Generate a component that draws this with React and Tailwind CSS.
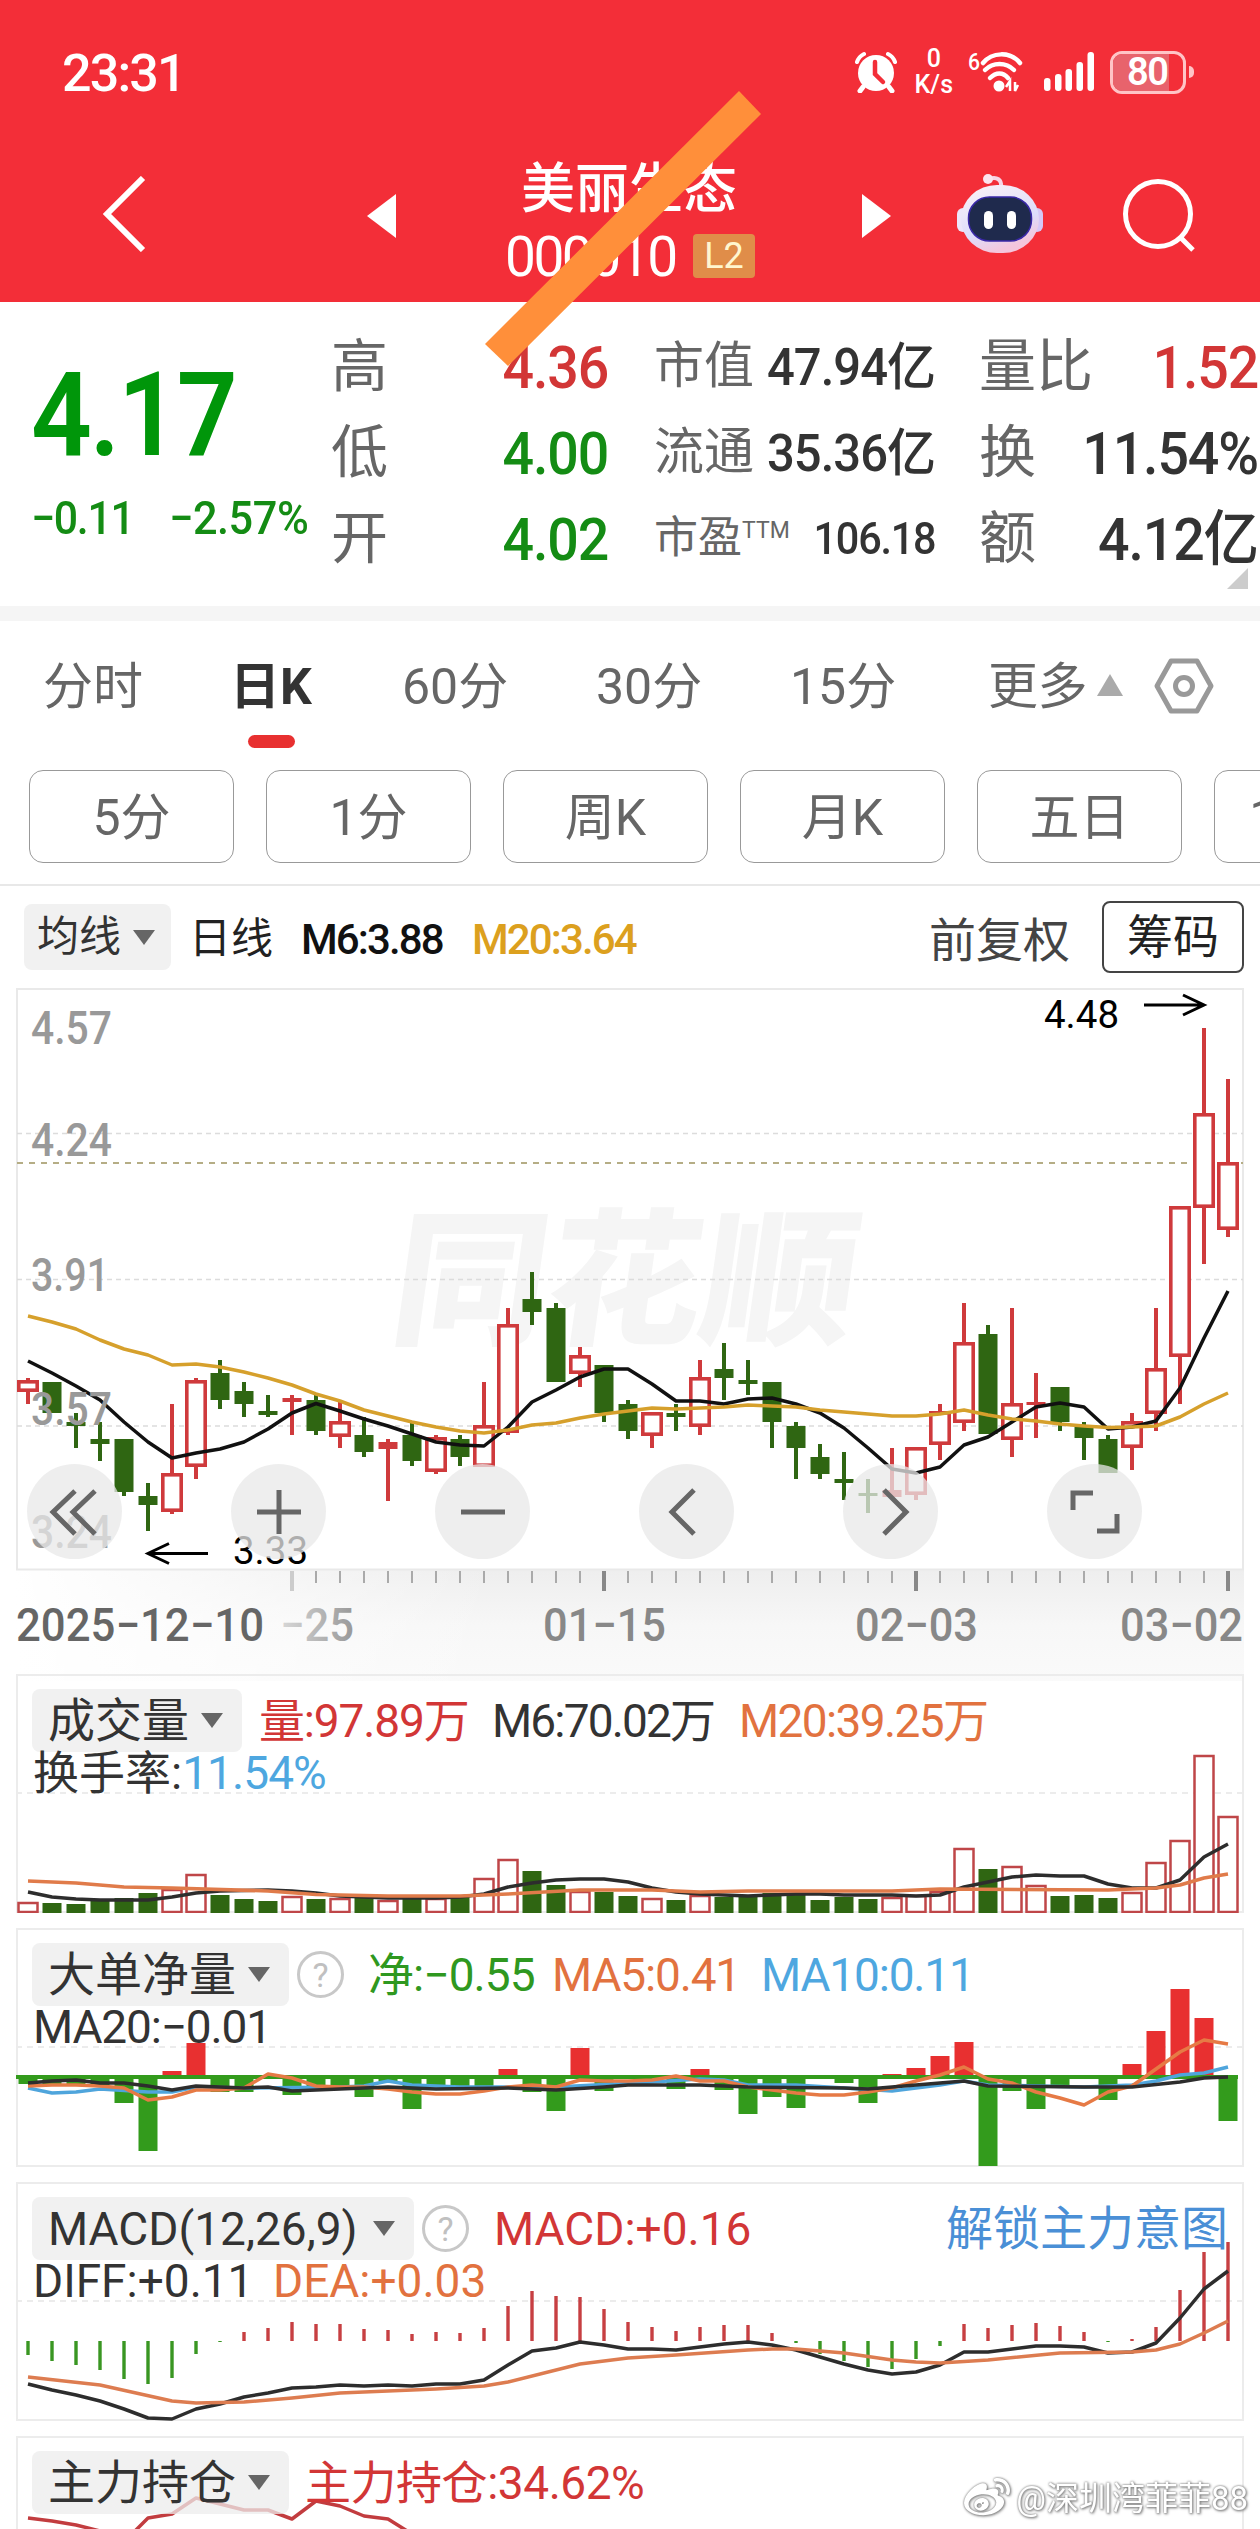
import { FaWeibo } from 'react-icons/fa';

const STEP = 24;
const X0 = 28;
const xAt = (i) => X0 + i * STEP;

// [direction, high, body top, body bottom, low] in chart pixels
const candles = [
  ['r', 1378, 1380, 1392, 1404], ['g', 1382, 1382, 1413, 1413], ['g', 1413, 1422, 1426, 1448], ['g', 1422, 1439, 1444, 1461],
  ['g', 1439, 1439, 1492, 1496], ['g', 1483, 1496, 1505, 1531], ['r', 1404, 1473, 1512, 1514], ['r', 1378, 1380, 1467, 1479],
  ['g', 1360, 1373, 1400, 1409], ['g', 1382, 1391, 1404, 1417], ['g', 1395, 1411, 1415, 1417], ['r', 1395, 1398, 1402, 1435],
  ['g', 1395, 1400, 1431, 1435], ['r', 1402, 1421, 1437, 1448], ['g', 1417, 1435, 1452, 1457], ['r', 1439, 1442, 1449, 1501],
  ['g', 1423, 1435, 1461, 1466], ['r', 1435, 1437, 1472, 1474], ['g', 1435, 1439, 1457, 1466], ['r', 1382, 1425, 1467, 1467],
  ['r', 1308, 1324, 1433, 1435], ['g', 1272, 1299, 1312, 1325], ['g', 1303, 1308, 1382, 1382], ['r', 1347, 1355, 1374, 1387],
  ['g', 1365, 1365, 1413, 1422], ['g', 1400, 1404, 1431, 1439], ['r', 1412, 1412, 1436, 1448], ['g', 1404, 1413, 1417, 1431],
  ['r', 1360, 1377, 1427, 1435], ['g', 1343, 1369, 1378, 1400], ['g', 1360, 1380, 1384, 1395], ['g', 1382, 1382, 1422, 1448],
  ['g', 1422, 1426, 1448, 1479], ['g', 1444, 1457, 1474, 1479], ['g', 1452, 1479, 1483, 1500], ['g', 1479, 1493, 1496, 1513],
  ['r', 1448, 1490, 1497, 1497], ['r', 1447, 1447, 1495, 1500], ['r', 1404, 1411, 1445, 1460], ['r', 1303, 1342, 1423, 1431],
  ['g', 1325, 1334, 1434, 1434], ['r', 1308, 1403, 1440, 1457], ['r', 1373, 1402, 1405, 1438], ['g', 1387, 1387, 1422, 1431],
  ['g', 1422, 1427, 1438, 1460], ['g', 1435, 1439, 1473, 1473], ['r', 1413, 1421, 1448, 1470], ['r', 1308, 1368, 1414, 1431],
  ['r', 1206, 1206, 1357, 1404], ['r', 1028, 1113, 1208, 1264], ['r', 1079, 1162, 1230, 1237],
];

const ma6 = [
  1361, 1373, 1386, 1400, 1422, 1442, 1458, 1453, 1449, 1442, 1429, 1413, 1403.5, 1411, 1419, 1426, 1434, 1442, 1445, 1446, 1427,
  1402, 1390, 1377, 1369, 1369, 1384, 1401, 1401, 1404, 1399, 1398, 1404, 1413, 1428, 1448, 1469, 1473, 1467, 1445, 1437, 1422,
  1407, 1403, 1407, 1429, 1427, 1421, 1388, 1338, 1291,
];
const ma20 = [
  1316, 1322, 1329, 1340, 1349, 1355, 1365, 1364, 1367, 1372, 1378, 1385, 1394, 1401, 1410, 1416, 1422, 1427, 1431, 1433, 1430,
  1425, 1423, 1418, 1414, 1411, 1408, 1409, 1408, 1407, 1405, 1406, 1407, 1410, 1412, 1414, 1416, 1416, 1414, 1410, 1415, 1419,
  1421, 1424, 1426, 1427.5, 1427, 1426, 1417, 1404, 1393,
];

const volumes = [
  11, 10, 9, 12, 15, 20, 24, 39, 18, 14, 12, 17, 14, 15, 16, 13, 15, 15, 16, 35, 54, 42, 28, 22, 21, 17, 15, 13, 18, 16, 16, 20,
  18, 13, 16, 14, 16, 18, 22, 65, 44, 47, 28, 17, 18, 15, 21, 51, 73, 158, 97,
];
const volM6 = [
  1892, 1897, 1899, 1900, 1900, 1900, 1897, 1893, 1891, 1890.5, 1890, 1891, 1893, 1896, 1897, 1898, 1898, 1898, 1897, 1894, 1887,
  1883, 1880, 1879, 1879, 1882, 1888, 1892, 1894, 1895, 1896, 1895, 1894, 1894, 1895, 1895, 1895, 1896, 1895, 1887, 1882, 1877,
  1875, 1876, 1876, 1884, 1888, 1888, 1880, 1857, 1844,
];
const volM20 = [
  [0, 1881], [2, 1883], [4, 1887], [6, 1888], [10, 1891], [12, 1894.5], [15, 1896], [18, 1896], [20, 1894], [23, 1890], [26, 1890],
  [28, 1892], [30, 1891], [36, 1891], [38, 1889], [45, 1890], [47, 1888], [48, 1885], [49, 1878], [50, 1874],
];

const netFlow = [
  -7, -7, -8, -8, -26, -74, 6, 34, -15, -15, -1, -18, -9, -9, -20, -4, -32, -10, -10, -10, 8, -15, -34, 29, -14, -2, 0, -12, 8,
  -13, -37, -20, -31, -1, -6, -26, 3, 9, 21, 35, -89, -14, -32, -10, -2, -23, 13, 46, 88, 59, -44,
];
const flowMa5 = [
  2086, 2085, 2085, 2086, 2088, 2100, 2097, 2090, 2090, 2088, 2074, 2078, 2086, 2087, 2087, 2089, 2092, 2094, 2094, 2091, 2087,
  2085, 2087, 2080, 2081, 2081, 2080, 2076, 2081, 2081, 2087, 2090, 2093, 2095, 2095, 2092, 2088, 2081, 2075, 2067, 2079, 2083,
  2092, 2098, 2105, 2092, 2086, 2069, 2052, 2040, 2044,
];
const flowMa10 = [
  [0, 2088], [1, 2093], [2, 2092], [3, 2089], [5, 2092], [6, 2092], [7, 2087], [9, 2088], [13, 2087], [14, 2086], [15, 2081],
  [16, 2085], [18, 2087], [22, 2087], [26, 2082], [28, 2079], [29, 2080], [30, 2085], [32, 2085], [34, 2088], [36, 2091],
  [38, 2085], [39, 2081], [40, 2085], [44, 2087], [46, 2085], [47, 2081], [48, 2075], [49, 2073], [50, 2067],
];
const flowMa20 = [
  [0, 2083], [1, 2081], [2, 2080], [3, 2083], [4, 2083], [5, 2086], [6, 2090], [7, 2086], [9, 2088], [10, 2087], [11, 2091],
  [13, 2089], [15, 2087], [17, 2089], [20, 2088], [22, 2090], [24, 2087], [25, 2085], [28, 2085], [30, 2087], [34, 2088],
  [35, 2089], [37, 2085], [39, 2081], [40, 2086], [44, 2087], [46, 2087], [48, 2082], [49, 2078], [50, 2077],
];

const macd = [
  -14, -20, -24, -29, -38, -43, -37, -13, -1, 9, 13, 19, 17, 17, 12, 11, 7, 9, 8, 13, 35, 50, 45, 44, 32, 19, 14, 10, 14, 16, 16,
  8, -2, -13, -20, -26, -28, -18, -5, 17, 13, 16, 18, 15, 9, -1, 2, 14, 51, 89, 99,
];
const diff = [
  2384, 2390, 2395, 2401, 2409, 2418, 2419, 2409, 2404, 2397, 2393, 2388, 2387, 2385, 2386, 2385, 2386, 2384, 2384, 2380, 2365,
  2351, 2348, 2342, 2345, 2349, 2349, 2350, 2347, 2344, 2342, 2345, 2350, 2357, 2364, 2370, 2374, 2372, 2365, 2352, 2352, 2349,
  2346, 2346, 2347, 2353, 2352, 2343, 2318, 2289, 2271,
];
const dea = [
  [0, 2377], [3, 2385], [6, 2401], [7, 2403], [9, 2402], [11, 2398], [13, 2393], [17, 2389], [19, 2386], [20, 2382], [23, 2364],
  [25, 2358], [27, 2355], [30, 2350], [31, 2349], [32, 2349], [34, 2353], [36, 2360], [37, 2362], [38, 2363], [40, 2360],
  [43, 2353], [46, 2352], [47, 2350], [48, 2344], [49, 2333], [50, 2321],
];
const holding = [
  [0, 2518], [1, 2521], [2, 2525], [3, 2531], [4, 2542], [5, 2518], [6, 2514], [7, 2498], [8, 2504], [9, 2510], [10, 2510],
  [11, 2519], [12, 2501], [13, 2506], [14, 2516], [15, 2519], [16, 2534], [17, 2548],
];

const toPoints = (data) =>
  data.map((d, i) => (Array.isArray(d) ? `${xAt(d[0])},${d[1]}` : `${xAt(i)},${d}`)).join(' ');

function Line({ data, color, width = 3.5 }) {
  return <polyline points={toPoints(data)} fill="none" stroke={color} strokeWidth={width} strokeLinejoin="round" />;
}

function Caret({ className }) {
  return (
    <svg width="22" height="15" viewBox="0 0 22 15" className={className}>
      <path d="M0 0h22L11 15z" fill="#666" />
    </svg>
  );
}

function Help() {
  return (
    <span className="ml-2 flex size-[47px] shrink-0 items-center justify-center rounded-full border-3 border-[#c8c8c8] text-[34px] leading-none text-[#c0c0c0]">
      ?
    </span>
  );
}

function Panel({ top, height = 239, title, help, chart, first, second, extra }) {
  return (
    <div className="relative mb-[15px] ml-4 h-[239px] w-[1228px] shrink-0 border-2 border-[#ececec]">
      <svg width="1228" height={height} viewBox={`16 ${top} 1228 ${height}`} className="absolute -inset-0.5">
        <path d={`M16 ${top + 119}H1244`} stroke="#ececec" strokeWidth="2" strokeDasharray="6 5" />
        {chart}
      </svg>
      <div className="relative ml-[14px] mt-[13px] flex h-[63px] items-center whitespace-nowrap text-[46px] leading-none">
        <span className="flex h-[63px] items-center rounded-lg bg-[#ececec]/75 pl-4 pr-[19px] text-[47px] text-[#333]">
          {title}
          <Caret className="ml-3" />
        </span>
        {help && <Help />}
        {first}
        {extra}
      </div>
      <div className="relative ml-[15px] mt-px flex h-[39px] items-center whitespace-nowrap text-[46px] leading-none text-[#333]">{second}</div>
    </div>
  );
}

function StatusBar() {
  return (
    <div className="flex h-[144px] items-center pl-[62px] pr-[66px] text-white">
      <span className="mt-[3px] text-[52px] font-medium leading-none tracking-[-0.035em]">23:31</span>
      <svg width="42" height="42" viewBox="0 0 42 42" className="ml-auto">
        <circle cx="21" cy="22" r="18" fill="#fff" />
        <path d="M8 36l-3 4M34 36l3 4" stroke="#fff" strokeWidth="5" strokeLinecap="round" />
        <path d="M2 11c1-3 3-6 7-8M40 11c-1-3-3-6-7-8" fill="none" stroke="#fff" strokeWidth="4" strokeLinecap="round" />
        <path d="M20 11v12l8 8" fill="none" stroke="#f32e38" strokeWidth="4.500" strokeLinecap="round" />
      </svg>
      <span className="ml-[18px] flex flex-col items-center text-[25px] font-medium leading-[26px]">
        <span>0</span>
        <span>K/s</span>
      </span>
      <svg width="56" height="42" viewBox="0 0 56 42" className="ml-[15px] overflow-visible">
        <text x="0" y="19" fontSize="24" fontWeight="500" fill="#fff" textLength="12" lengthAdjust="spacingAndGlyphs">6</text>
        <g fill="none" stroke="#fff" strokeWidth="4.500" strokeLinecap="round">
          <path d="M15 12c9-11 27-12 37 0" />
          <path d="M17 19c8-8 21-8 29 0" />
          <path d="M22 27c6-6 13-6 18 0" />
        </g>
        <circle cx="31" cy="35" r="5.500" fill="#fff" />
        <path d="M38 36l4-6v10M50 34l-3 6V31" stroke="#fff" strokeWidth="2.500" fill="none" />
      </svg>
      <svg width="50" height="40" viewBox="0 0 50 40" className="ml-[20px]">
        <g fill="#fff">
          <rect x="0" y="26" width="6.500" height="13" rx="3" />
          <rect x="11" y="22" width="6.500" height="17" rx="3" />
          <rect x="21.500" y="17" width="6.500" height="22" rx="3" />
          <rect x="32.500" y="10" width="6.500" height="29" rx="3" />
          <rect x="43.500" y="0" width="6.500" height="39" rx="3" />
        </g>
      </svg>
      <span className="relative ml-[16px] flex h-[43px] w-[76px] items-center overflow-hidden rounded-[12px] border-3 border-[#ffc4c6]">
        <span className="absolute inset-y-0 left-0 w-[56px] bg-[#e8636c]" />
        <span className="relative ml-[14px] text-[38px] font-semibold leading-none tracking-[-0.04em]">80</span>
      </span>
      <span className="ml-[3px] h-3 w-[5px] rounded-r-full bg-[#ffc4c6]" />
    </div>
  );
}

function Robot() {
  return (
    <svg width="88" height="82" viewBox="956 172 88 82" className="ml-[65px]">
      <defs>
        <linearGradient id="shell" x1="0" y1="0" x2="0.4" y2="1">
          <stop offset="0" stopColor="#fdf3f6" />
          <stop offset="0.7" stopColor="#dddcfb" />
          <stop offset="1" stopColor="#f4c6dc" />
        </linearGradient>
      </defs>
      <path d="M989 178c8-3 13 1 12 8" fill="none" stroke="#f7d5e6" strokeWidth="4" />
      <circle cx="988" cy="178" r="5" fill="#fce4ee" />
      <rect x="957" y="207" width="12" height="24" rx="6" fill="#ece6fa" />
      <rect x="1031" y="207" width="12" height="24" rx="6" fill="#d5c8f6" />
      <rect x="961" y="184" width="78" height="68" rx="36" fill="url(#shell)" />
      <rect x="968.500" y="196" width="63" height="44" rx="21" fill="#1f2a4d" stroke="#3a28a8" strokeWidth="1.500" />
      <rect x="984" y="210" width="9" height="18" rx="4.500" fill="#fff" />
      <rect x="1007" y="210" width="9" height="18" rx="4.500" fill="#fff" />
    </svg>
  );
}

function Header() {
  return (
    <div className="relative h-[302px] shrink-0 bg-[#f32e38]">
      <StatusBar />
      <div className="flex h-[140px] items-center pl-[102px] text-white">
        <svg width="44" height="76" viewBox="0 0 44 76">
          <path d="M41 2L5 38l36 36" fill="none" stroke="#fff" strokeWidth="6" />
        </svg>
        <svg width="29" height="44" viewBox="0 0 29 44" className="mt-[3px] ml-[221px]">
          <path d="M29 0v44L0 22z" fill="#fff" />
        </svg>
        <div className="ml-[109px] flex w-[252px] flex-col">
          <span className="mt-[8px] ml-[16px] text-[54px] font-medium leading-[72px]">美丽生态</span>
          <span className="mt-[3px] flex h-[53px] items-center">
            <span className="mt-[3px] w-[188px] text-[55px] leading-none tracking-[-0.045em]">000010</span>
            <span className="flex h-11 w-[62px] items-center justify-center rounded bg-[#e08d49] text-[36px] leading-none text-[#fff6cf]">
              L2
            </span>
          </span>
        </div>
        <svg width="29" height="44" viewBox="0 0 29 44" className="mt-[3px] ml-[105px]">
          <path d="M0 0v44l29-22z" fill="#fff" />
        </svg>
        <Robot />
        <svg width="76" height="76" viewBox="0 0 76 76" className="ml-[78px]">
          <circle cx="36" cy="38" r="32.500" fill="none" stroke="#fff" strokeWidth="5" />
          <path d="M58 61l13 13" stroke="#fff" strokeWidth="5" />
        </svg>
      </div>
      <svg width="278" height="277" viewBox="484 90 278 277" className="absolute left-[484px] top-[90px] z-10">
        <path d="M739 91l22 23-253 252-23-22z" fill="#ff8f3a" />
      </svg>
    </div>
  );
}

function Quote({ label, value, labelClass = 'text-[57px]', valueClass }) {
  return (
    <div className="flex h-[86px] items-center justify-between leading-none">
      <span className={`text-[#666] ${labelClass}`}>{label}</span>
      <span className={valueClass}>{value}</span>
    </div>
  );
}

function Quotes() {
  const big = 'pt-[3px] text-[60px] font-medium tracking-[-0.02em] origin-right scale-x-[0.925]';
  const mid = 'pt-[2px] text-[51px] font-medium tracking-[-0.02em] origin-right scale-x-[0.96] text-[#333]';
  return (
    <div className="relative flex h-[304px] shrink-0 whitespace-nowrap pt-[21px]">
      <div className="w-[331px] pl-[31px] text-[#00960a]">
        <div className="mt-[34px] origin-left scale-x-[0.92] text-[116px] font-semibold leading-[116px] tracking-[-0.02em]">4.17</div>
        <div className="mt-[22px] flex text-[46px] font-medium leading-none text-[#148c14]">
          <span className="w-[138px] origin-left scale-x-[0.93] tracking-[-0.03em]">−0.11</span>
          <span className="origin-left scale-x-[0.94] tracking-[-0.01em]">−2.57%</span>
        </div>
      </div>
      <div className="w-[277px]">
        <Quote label="高" value="4.36" valueClass={`${big} text-[#d23636]`} />
        <Quote label="低" value="4.00" valueClass={`${big} text-[#148c14]`} />
        <Quote label="开" value="4.02" valueClass={`${big} text-[#148c14]`} />
      </div>
      <div className="ml-[46px] w-[281px]">
        <Quote label="市值" value="47.94亿" labelClass="text-[50px]" valueClass={mid} />
        <Quote label="流通" value="35.36亿" labelClass="text-[50px]" valueClass={mid} />
        <Quote
          label={<>市盈<span className="relative -top-[15px] text-[23px]">TTM</span></>}
          value="106.18"
          labelClass="text-[44px]"
          valueClass="text-[45px] font-medium tracking-[-0.03em] origin-right scale-x-[0.92] text-[#333]"
        />
      </div>
      <div className="ml-[44px] w-[279px]">
        <Quote label="量比" value="1.52" valueClass={`${big} text-[#d23636]`} />
        <Quote label="换" value="11.54%" valueClass={`${big} text-[#333]`} />
        <Quote label="额" value="4.12亿" valueClass={`${big} text-[#333]`} />
      </div>
      <svg width="21" height="21" viewBox="0 0 21 21" className="absolute right-3 bottom-[17px]">
        <path d="M21 0v21H0z" fill="#ccc" />
      </svg>
    </div>
  );
}

function Tabs() {
  return (
    <div className="relative flex h-[149px] shrink-0 pt-[35px] text-[50px] leading-[62px] whitespace-nowrap text-[#666]">
      <span className="ml-[43px] w-[187px]">分时</span>
      <span className="flex w-[172px] flex-col font-bold text-[#333]">
        日K
        <span className="mt-[17px] ml-[18px] h-[13px] w-[47px] rounded-full bg-[#e83030]" />
      </span>
      <span className="w-[194px]">60分</span>
      <span className="w-[194px]">30分</span>
      <span className="w-[198px]">15分</span>
      <span className="w-[98px] tracking-[-0.01em]">更多</span>
      <svg width="26" height="22" viewBox="0 0 26 22" className="mt-[18px] ml-[11px]">
        <path d="M13 0l13 22H0z" fill="#aaa" />
      </svg>
      <svg width="60" height="56" viewBox="0 0 60 56" className="mt-[2px] ml-[31px]">
        <path d="M17 3h26l14 25-14 25H17L3 28z" fill="none" stroke="#999" strokeWidth="5" strokeLinejoin="round" />
        <circle cx="30" cy="28" r="8.500" fill="none" stroke="#999" strokeWidth="5" />
      </svg>
    </div>
  );
}

function Periods() {
  return (
    <div className="flex h-[116px] shrink-0 gap-8 overflow-hidden border-b-2 border-[#e8e8e8] pl-[29px]">
      {['5分', '1分', '周K', '月K', '五日', '120分'].map((name) => (
        <span
          key={name}
          className="flex h-[93px] w-[205px] shrink-0 items-center justify-center rounded-[14px] border-[1.500px] border-[#999] pt-[2px] text-[50px] leading-none text-[#666]"
        >
          {name}
        </span>
      ))}
    </div>
  );
}

function ChartBar() {
  return (
    <div className="flex h-[102px] shrink-0 items-center pl-6 text-[42px] leading-none whitespace-nowrap">
      <span className="flex h-[66px] w-[147px] items-center rounded-lg bg-[#f1f1f1] pl-[13px] text-[#333]">
        均线
        <Caret className="ml-3" />
      </span>
      <span className="ml-[18px] w-[112px] pt-[3px] text-[#222]">日线</span>
      <span className="w-[171px] pt-[5px] font-medium tracking-[-0.045em] text-[#111]">M6:3.88</span>
      <span className="pt-[5px] font-medium tracking-[-0.045em] text-[#dca01e]">M20:3.64</span>
      <span className="ml-auto pt-[6px] text-[47px] text-[#444]">前复权</span>
      <span className="mr-4 ml-[32px] flex h-[72px] w-[142px] items-center justify-center rounded-lg border-2 border-[#444] text-[46px] text-[#222]">
        筹码
      </span>
    </div>
  );
}

const controls = [
  'M48 27L26 48l22 22M68 27L46 48l22 22',
  'M26 48h44M48 26v44',
  'M26 48h44',
  'M55 26L33 48l22 22',
  'M41 26l22 22-22 22',
  'M26 46V29h20M50 67h20V50',
];

function KLine() {
  return (
    <div className="relative ml-4 h-[686px] w-[1228px] shrink-0">
      <svg width="1228" height="686" viewBox="16 988 1228 686" className="block overflow-visible">
        <defs>
          <linearGradient id="axisDown" x1="0" y1="0" x2="0" y2="1">
            <stop offset="0" stopColor="#eeeeee" />
            <stop offset="0.5" stopColor="#f7f7f7" />
            <stop offset="1" stopColor="#fafafa" />
          </linearGradient>
          <linearGradient id="axisFade" x1="0" y1="0" x2="1" y2="0">
            <stop offset="0" stopColor="#fff" />
            <stop offset="1" stopColor="#fff" stopOpacity="0" />
          </linearGradient>
          <linearGradient id="dateFade" x1="0" y1="0" x2="1" y2="0">
            <stop offset="0" stopColor="#d8d8d8" />
            <stop offset="1" stopColor="#999" />
          </linearGradient>
        </defs>
        <rect x="16" y="1570" width="1228" height="111" fill="url(#axisDown)" />
        <rect x="16" y="1570" width="480" height="111" fill="url(#axisFade)" />
        <rect x="17" y="989" width="1226" height="580.500" fill="none" stroke="#e9e9e9" strokeWidth="2" />
        <text x="388" y="1333" fontSize="147" fontWeight="900" fill="#f5f5f5" textLength="464" lengthAdjust="spacingAndGlyphs" transform="skewX(-8)" className="translate-x-[186px]">
          同花顺
        </text>
        <path d="M17 1133.500H1243M17 1279.500H1243M17 1426H1243" stroke="#dcdcdc" strokeWidth="1.500" strokeDasharray="5 4" />
        <path d="M17 1163H1243" stroke="#b5ad85" strokeWidth="2" strokeDasharray="6 6" />

        {candles.map(([dir, high, top, bottom, low], i) => {
          const x = xAt(i);
          if (dir === 'g') {
            return (
              <g key={i} fill="#2f6612">
                <rect x={x - 2} y={high} width="4" height={low - high} />
                <rect x={x - 9.5} y={top} width="19" height={bottom - top} />
              </g>
            );
          }
          const thin = bottom - top < 8;
          return (
            <g key={i} fill="#cf3a3c">
              <rect x={x - 2} y={high} width="4" height={top - high} />
              <rect x={x - 2} y={bottom} width="4" height={low - bottom} />
              {thin ? (
                <rect x={x - 9.5} y={top} width="19" height={bottom - top} />
              ) : (
                <rect x={x - 9.2} y={top + 1.8} width="18.400" height={bottom - top - 3.6} fill="#fff" stroke="#cf3a3c" strokeWidth="3.600" />
              )}
            </g>
          );
        })}
        <Line data={ma6} color="#111" />
        <Line data={ma20} color="#d6a02c" />

        <g fontSize="46" fontWeight="500" fill="#999">
          <text x="31" y="1044" textLength="81" lengthAdjust="spacingAndGlyphs">4.57</text>
          <text x="31" y="1156" textLength="81" lengthAdjust="spacingAndGlyphs">4.24</text>
          <text x="31" y="1291" textLength="78" lengthAdjust="spacingAndGlyphs">3.91</text>
          <text x="31" y="1425" textLength="81" lengthAdjust="spacingAndGlyphs">3.57</text>
          <text x="31" y="1548" textLength="81" lengthAdjust="spacingAndGlyphs">3.24</text>
        </g>
        <g fontSize="39" fill="#000">
          <text x="1044" y="1028" textLength="75" lengthAdjust="spacingAndGlyphs">4.48</text>
          <text x="233" y="1564" textLength="75" lengthAdjust="spacingAndGlyphs">3.33</text>
        </g>
        <g fill="none" stroke="#000" strokeWidth="3">
          <path d="M1144 1005h60M1183 995l21 10-21 10" />
          <path d="M208 1553.500h-59M169 1543.500l-21 10 21 10" />
        </g>

        {candles.map((_, i) => {
          if (i < 11) return null;
          const major = (i - 11) % 13 === 0;
          return (
            <rect
              key={i}
              x={xAt(i) - (major ? 2 : 1)}
              y="1571"
              width={major ? 4 : 2}
              height={major ? 20 : 12}
              fill={i === 11 ? '#ccc' : major ? '#888' : '#aaa'}
            />
          );
        })}
        <g fontSize="46" fontWeight="500" fill="#888">
          <text x="16" y="1641" fill="#666" textLength="248" lengthAdjust="spacingAndGlyphs">2025−12−10</text>
          <text x="280" y="1641" fill="url(#dateFade)" textLength="74" lengthAdjust="spacingAndGlyphs">−25</text>
          <text x="543" y="1641" textLength="123" lengthAdjust="spacingAndGlyphs">01−15</text>
          <text x="855" y="1641" textLength="123" lengthAdjust="spacingAndGlyphs">02−03</text>
          <text x="1120" y="1641" textLength="123" lengthAdjust="spacingAndGlyphs">03−02</text>
        </g>
      </svg>
      <div className="absolute top-[476px] left-[11px] flex gap-[109px]">
        {controls.map((d) => (
          <span key={d} className="size-[95px] rounded-full bg-[#e8e8e8]/75">
            <svg width="96" height="96" viewBox="0 0 96 96">
              <path d={d} fill="none" stroke="#666" strokeWidth="5" />
            </svg>
          </span>
        ))}
      </div>
    </div>
  );
}

function VolumeChart() {
  return (
    <>
      {volumes.map((h, i) =>
        candles[i][0] === 'g' ? (
          <rect key={i} x={xAt(i) - 9.5} y={1913 - h} width="19" height={h} fill="#2f6612" />
        ) : (
          <rect key={i} x={xAt(i) - 9.5} y={1914 - h} width="19" height={h - 2} fill="#fff" stroke="#bf4648" strokeWidth="2.500" />
        )
      )}
      <Line data={volM6} color="#2d2d2d" />
      <Line data={volM20} color="#e07b4a" />
    </>
  );
}

function FlowChart() {
  return (
    <>
      {netFlow.map((v, i) => (
        <rect key={i} x={xAt(i) - 9.5} y={v > 0 ? 2077 - v : 2077} width="19" height={Math.abs(v)} fill={v > 0 ? '#e83030' : '#339b1c'} />
      ))}
      <path d="M16 2077H1238" stroke="#339b1c" strokeWidth="4" />
      <Line data={flowMa10} color="#4fa5dc" />
      <Line data={flowMa5} color="#e67a45" />
      <Line data={flowMa20} color="#2d2d2d" />
    </>
  );
}

function MacdChart() {
  return (
    <>
      {macd.map((v, i) => (
        <rect key={i} x={xAt(i) - 1.7} y={v > 0 ? 2341 - v : 2341} width="3.400" height={Math.abs(v)} fill={v > 0 ? '#c73f42' : '#399622'} />
      ))}
      <Line data={diff} color="#2d2d2d" />
      <Line data={dea} color="#dd7c50" />
    </>
  );
}

export default function App() {
  return (
    <div className="relative flex h-[2529px] w-[1260px] flex-col overflow-hidden bg-white font-[Roboto,'Noto_Sans_CJK_SC',sans-serif]">
      <Header />
      <Quotes />
      <div className="h-[15px] shrink-0 bg-[#f5f5f5]" />
      <Tabs />
      <Periods />
      <ChartBar />
      <KLine />

      <Panel
        top={1674}
        title="成交量"
        chart={<VolumeChart />}
        first={
          <>
            <span className="ml-[17px] w-[233px] tracking-[-0.025em] text-[#d23636]">量:97.89万</span>
            <span className="w-[247px] tracking-[-0.04em] text-[#333]">M6:70.02万</span>
            <span className="tracking-[-0.035em] text-[#e2723f]">M20:39.25万</span>
          </>
        }
        second={
          <>
            换手率:<span className="tracking-[-0.02em] text-[#4ea7e0]">11.54%</span>
          </>
        }
      />
      <Panel
        top={1928}
        title="大单净量"
        help
        chart={<FlowChart />}
        first={
          <>
            <span className="ml-[24px] w-[184px] tracking-[-0.02em] text-[#2f9820]">净:−0.55</span>
            <span className="w-[209px] tracking-[-0.025em] text-[#e2723f]">MA5:0.41</span>
            <span className="tracking-[-0.025em] text-[#4ea7e0]">MA10:0.11</span>
          </>
        }
        second={<span className="tracking-[-0.025em]">MA20:−0.01</span>}
      />
      <Panel
        top={2182}
        title={<span className="w-[313px] text-[46px]">MACD(12,26,9)</span>}
        help
        chart={<MacdChart />}
        first={<span className="ml-[25px] text-[#d23636]">MACD:+0.16</span>}
        extra={<span className="mr-[14px] ml-auto text-[47px] text-[#4a8fd6]">解锁主力意图</span>}
        second={
          <>
            <span className="w-[240px]">DIFF:+0.11</span>
            <span className="text-[#e2723f]">DEA:+0.03</span>
          </>
        }
      />
      <Panel
        top={2436}
        title="主力持仓"
        chart={<Line data={holding} color="#c23c3f" />}
        first={<span className="ml-[16px] tracking-[-0.01em] text-[#d23636]">主力持仓:34.62%</span>}
      />

      <div className="absolute right-3 bottom-[8px] flex items-center text-[33px] leading-none whitespace-nowrap text-white [filter:drop-shadow(0_0_1px_#777)_drop-shadow(1px_1px_1px_#999)]">
        <FaWeibo className="mr-1.5 size-[46px]" />
        @深圳湾菲菲88
      </div>
    </div>
  );
}
